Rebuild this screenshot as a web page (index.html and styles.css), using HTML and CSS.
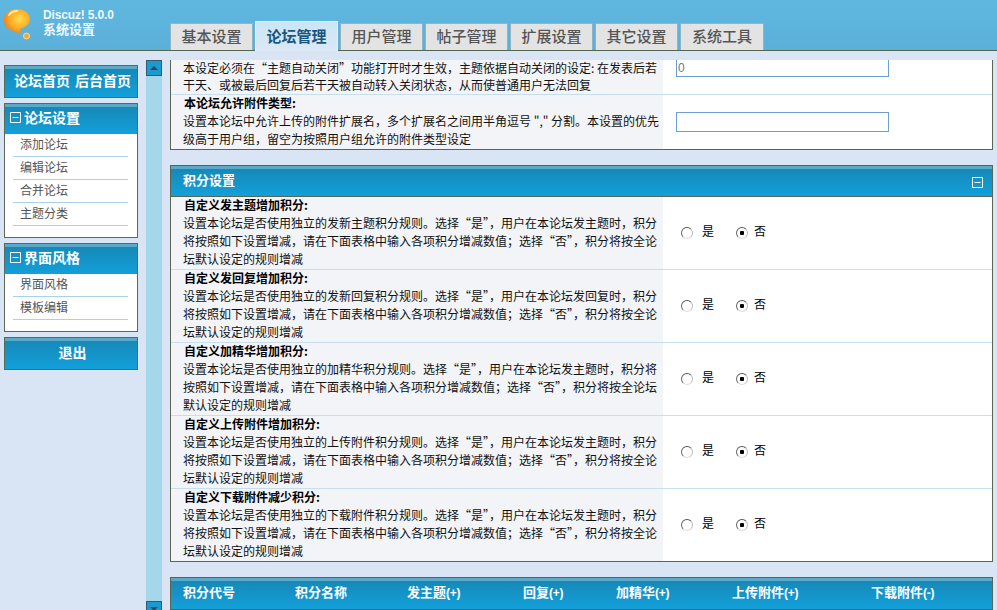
FILE: index.html
```html
<!DOCTYPE html>
<html lang="zh-CN">
<head>
<meta charset="utf-8">
<title>Discuz! 系统设置</title>
<link rel="stylesheet" href="styles.css">
</head>
<body>
<header class="top">
  <div class="brand">
    <svg class="bulb" width="30" height="40" viewBox="0 0 30 40">
      <defs>
        <radialGradient id="bg" cx="0.6" cy="0.4" r="0.65">
          <stop offset="0" stop-color="#ffdc4e"/>
          <stop offset="0.55" stop-color="#ffae28"/>
          <stop offset="1" stop-color="#ee7a1a"/>
        </radialGradient>
      </defs>
      <path d="M16 9C9 9 4 14 4 20c0 6 4 9 9 11l7 3c1-2 1-3 0-5 6-2 10-5 10-10 0-6-6-10-14-10z" fill="url(#bg)"/>
      <path d="M9 15c2-3 5-4 8-4" fill="none" stroke="#ffe9a0" stroke-width="2" stroke-linecap="round"/>
      <circle cx="26.500" cy="36" r="3" fill="#f9a437" stroke="#f7dc8c"/>
    </svg>
    <div class="brand-text"><div>Discuz! 5.0.0</div><div>系统设置</div></div>
  </div>
  <nav class="tabs">
    <a class="tab">基本设置</a>
    <a class="tab active">论坛管理</a>
    <a class="tab">用户管理</a>
    <a class="tab">帖子管理</a>
    <a class="tab">扩展设置</a>
    <a class="tab">其它设置</a>
    <a class="tab">系统工具</a>
  </nav>
</header>
<div class="body">
  <aside class="side">
    <div class="box link-box"><div class="bar center"><span>论坛首页</span> <span>后台首页</span></div></div>
    <div class="box">
      <div class="bar"><svg class="minus" viewBox="0 0 11 11"><path d="M.5.5h10v10H.5zM2.500 5.500h6" fill="none" stroke="#fff"/></svg>论坛设置</div>
      <ul class="menu"><li>添加论坛</li><li>编辑论坛</li><li>合并论坛</li><li>主题分类</li></ul>
    </div>
    <div class="box">
      <div class="bar"><svg class="minus" viewBox="0 0 11 11"><path d="M.5.5h10v10H.5zM2.500 5.500h6" fill="none" stroke="#fff"/></svg>界面风格</div>
      <ul class="menu"><li>界面风格</li><li>模板编辑</li></ul>
    </div>
    <div class="box link-box"><div class="bar center exit">退出</div></div>
  </aside>
  <div class="scroll">
    <div class="sbtn"><span class="up"></span></div>
    <div class="sbtn"><span class="down"></span></div>
  </div>
  <main class="main">
    <section class="panel clipped">
      <div class="row first">
        <div class="desc">本设定必须在“主题自动关闭”功能打开时才生效，主题依据自动关闭的设定: 在发表后若<br>干天、或被最后回复后若干天被自动转入关闭状态，从而使普通用户无法回复</div>
        <div class="val"><input class="txt cut" value="0"></div>
      </div>
      <div class="row">
        <div class="desc"><b>本论坛允许附件类型:</b><br>设置本论坛中允许上传的附件扩展名，多个扩展名之间用半角逗号 "," 分割。本设置的优先<br>级高于用户组，留空为按照用户组允许的附件类型设定</div>
        <div class="val"><input class="txt"></div>
      </div>
    </section>

    <section class="panel">
      <div class="head">积分设置<svg class="minus end" viewBox="0 0 11 11"><path d="M.5.5h10v10H.5zM2.500 5.500h6" fill="none" stroke="#fff"/></svg></div>
      <div class="row">
        <div class="desc"><b>自定义发主题增加积分:</b><br>设置本论坛是否使用独立的发新主题积分规则。选择“是”，用户在本论坛发主题时，积分<br>将按照如下设置增减，请在下面表格中输入各项积分增减数值；选择“否”，积分将按全论<br>坛默认设定的规则增减</div>
        <div class="val"><label class="opt"><input type="radio" name="a">是</label><label class="opt"><input type="radio" name="a" checked>否</label></div>
      </div>
      <div class="row">
        <div class="desc"><b>自定义发回复增加积分:</b><br>设置本论坛是否使用独立的发新回复积分规则。选择“是”，用户在本论坛发回复时，积分<br>将按照如下设置增减，请在下面表格中输入各项积分增减数值；选择“否”，积分将按全论<br>坛默认设定的规则增减</div>
        <div class="val"><label class="opt"><input type="radio" name="b">是</label><label class="opt"><input type="radio" name="b" checked>否</label></div>
      </div>
      <div class="row">
        <div class="desc"><b>自定义加精华增加积分:</b><br>设置本论坛是否使用独立的加精华积分规则。选择“是”，用户在本论坛发主题时，积分将<br>按照如下设置增减，请在下面表格中输入各项积分增减数值；选择“否”，积分将按全论坛<br>默认设定的规则增减</div>
        <div class="val"><label class="opt"><input type="radio" name="c">是</label><label class="opt"><input type="radio" name="c" checked>否</label></div>
      </div>
      <div class="row">
        <div class="desc"><b>自定义上传附件增加积分:</b><br>设置本论坛是否使用独立的上传附件积分规则。选择“是”，用户在本论坛发主题时，积分<br>将按照如下设置增减，请在下面表格中输入各项积分增减数值；选择“否”，积分将按全论<br>坛默认设定的规则增减</div>
        <div class="val"><label class="opt"><input type="radio" name="d">是</label><label class="opt"><input type="radio" name="d" checked>否</label></div>
      </div>
      <div class="row">
        <div class="desc"><b>自定义下载附件减少积分:</b><br>设置本论坛是否使用独立的下载附件积分规则。选择“是”，用户在本论坛发主题时，积分<br>将按照如下设置增减，请在下面表格中输入各项积分增减数值；选择“否”，积分将按全论<br>坛默认设定的规则增减</div>
        <div class="val"><label class="opt"><input type="radio" name="e">是</label><label class="opt"><input type="radio" name="e" checked>否</label></div>
      </div>
    </section>

    <section class="panel cols">
      <div class="head grid">
        <span>积分代号</span><span>积分名称</span><span>发主题<i>(+)</i></span><span>回复<i>(+)</i></span><span>加精华<i>(+)</i></span><span>上传附件<i>(+)</i></span><span>下载附件<i>(-)</i></span>
      </div>
    </section>
  </main>
</div>
</body>
</html>
```
FILE: styles.css
```css
* { box-sizing: border-box; }
html, body { margin: 0; height: 100%; overflow: hidden; }
body {
  width: 997px;
  height: 610px;
  display: flex;
  flex-direction: column;
  background: #d9e5f4;
  font: 12px/18px "Noto Sans CJK SC", "Liberation Sans", sans-serif;
  color: #111;
}
.top {
  height: 51px;
  flex: none;
  display: flex;
  align-items: flex-end;
  background: linear-gradient(#5fb7e0, #5bb0d8);
  border-bottom: 1px solid #55664f;
}
.brand { width: 170px; height: 50px; display: flex; position: relative; }
.bulb { position: absolute; left: 0; top: 0; }
.brand-text {
  margin: 8px 0 0 43px;
  font-size: 12px;
  line-height: 14px;
  font-weight: 700;
  color: #eef8ff;
}
.brand-text div:first-child { font-family: "Liberation Sans", sans-serif; letter-spacing: -.15px; }
.brand-text div:last-child { font-size: 13px; }
.tabs { display: flex; gap: 2px; align-items: flex-end; height: 50px; }
.tab {
  width: 83px;
  height: 27px;
  text-align: center;
  font-size: 15px;
  line-height: 24px;
  font-weight: 500;
  color: #555;
  background: #e3e3e3;
  border: 1px solid #8fb3c8;
  border-bottom: 0;
}
.tab.active {
  height: 30px;
  margin-bottom: -1px;
  line-height: 27px;
  font-weight: 700;
  color: #1a5780;
  background: linear-gradient(#c9e6f5, #dce8f5);
  border: 1px solid #e4f2fa;
  border-bottom: 0;
  position: relative;
}
.tab:last-child { width: 84px; }
.body { flex: 1; min-height: 0; display: flex; }
.side { width: 146px; flex: none; padding: 14px 8px 0 4px; display: flex; flex-direction: column; gap: 5px; }
.box { border: 1px solid #5a6a58; background: #fff; }
.bar, .head {
  color: #fff;
  font-weight: 700;
  background: linear-gradient(#5ba9c9 0 3px, #1689b8 3px, #12a0da);
}
.bar {
  height: 30px;
  padding: 0 0 4px 5px;
  display: flex;
  align-items: center;
  font-size: 14px;
  line-height: 26px;
}
.bar.center { justify-content: center; gap: 5px; padding: 0 0 4px 3px; white-space: pre; }
.link-box .bar { height: 31px; }
.minus { width: 11px; height: 11px; margin-right: 3px; flex: none; }
.menu { margin: 0 0 11px; padding: 0 9px 0 8px; list-style: none; }
.menu li {
  height: 23px;
  padding-left: 7px;
  color: #555;
  line-height: 20px;
  border-bottom: 1px solid #a9d2e6;
}
.scroll {
  width: 16px;
  height: 557px;
  flex: none;
  margin-top: 9px;
  background: #a5d7ea;
  display: flex;
  flex-direction: column;
  justify-content: space-between;
}
.sbtn {
  height: 16px;
  background: #1a9ad0;
  border: 1px solid #36596e;
  display: flex;
  align-items: center;
  justify-content: center;
}
.up, .down { border: 4px solid transparent; }
.up { border-bottom: 4px solid #2b4a5c; border-top: 0; }
.down { border-top: 4px solid #2b4a5c; border-bottom: 0; }
.main { flex: 1; min-width: 0; padding: 9px 4px 0 8px; display: flex; flex-direction: column; gap: 15px; }
.panel { border: 1px solid #5a6650; background: #fff; flex: none; }
.panel.clipped { border-top: 0; }
.head {
  height: 31px;
  position: relative;
  padding-left: 12px;
  font-size: 13px;
  line-height: 27px;
  border-bottom: 1px solid #5a6650;
}
.cols .head { border-bottom: 0; }
.grid i { font: 700 12px "Liberation Sans", sans-serif; letter-spacing: -.3px; }
.end { position: absolute; right: 9px; top: 11px; margin: 0; }
.grid { display: grid; grid-template-columns: 112px 112px 116px 93px 116px 139px 1fr; }
.row { display: flex; border-bottom: 1px solid #c5dfee; }
.row:last-child { border-bottom: 0; }
.desc {
  width: 492px;
  flex: none;
  padding: 0 0 1px 12px;
  background: #f2f4f8;
  white-space: nowrap;
}
.desc::before { content: ""; display: block; margin-top: -1px; }
.desc b { padding-left: 1px; color: #000; }
.first { height: 35px; overflow: hidden; }
.first .desc { line-height: 17px; }
.val { flex: 1; display: flex; align-items: center; padding-left: 13px; color: #000; }
.txt {
  width: 213px;
  height: 20px;
  padding: 0 1px;
  border: 1px solid #6a9fd0;
  font: 12px "Liberation Sans", sans-serif;
  color: #777;
  background: #fff;
}
.first .val { align-items: flex-start; }
.txt.cut { height: 17px; border-top: 0; }
.opt { display: flex; align-items: center; width: 53px; height: 18px; line-height: 14px; padding-bottom: 4px; }
.opt + .opt { margin-left: 2px; }
.opt input {
  appearance: none;
  margin: 4px 9px 0 5px;
  width: 12px;
  height: 12px;
  flex: none;
  border: 1px solid;
  border-color: #555 #bbb #ddd #666;
  border-radius: 50%;
  background: #fff;
}
.opt + .opt input { margin-right: 6px; }
.opt input:checked { background: radial-gradient(circle, #000 0 2px, #fff 2.500px); }
```
